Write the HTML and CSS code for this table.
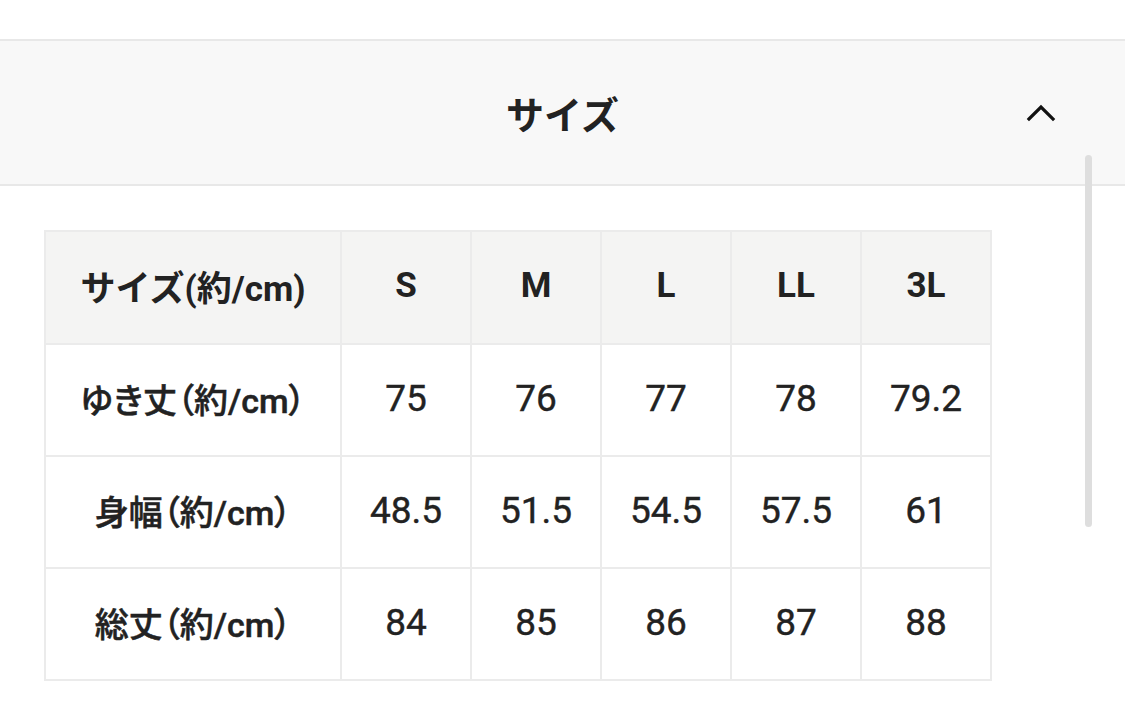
FILE: index.html
```html
<!DOCTYPE html>
<html lang="ja">
<head>
<meta charset="utf-8">
<link rel="stylesheet" href="styles.css">
</head>
<body>
<div class="page">
  <div class="top-space"></div>
  <div class="acc-head">
    <span class="acc-title">サイズ</span>
    <svg class="chev" width="30" height="18" viewBox="0 0 30 18"><path d="M3 15 L15 3 L27 15" fill="none" stroke="#111" stroke-width="3.2" stroke-linecap="square" stroke-linejoin="miter"/></svg>
  </div>
  <div class="acc-body">
    <table class="size-table">
      <colgroup><col class="c-label"><col class="c-val"><col class="c-val"><col class="c-val"><col class="c-val"><col class="c-val"></colgroup>
      <thead>
        <tr><th>サイズ(約/cm)</th><th>S</th><th>M</th><th>L</th><th>LL</th><th>3L</th></tr>
      </thead>
      <tbody>
        <tr><td class="lbl">ゆき丈（約/cm）</td><td>75</td><td>76</td><td>77</td><td>78</td><td>79.2</td></tr>
        <tr><td class="lbl">身幅（約/cm）</td><td>48.5</td><td>51.5</td><td>54.5</td><td>57.5</td><td>61</td></tr>
        <tr><td class="lbl">総丈（約/cm）</td><td>84</td><td>85</td><td>86</td><td>87</td><td>88</td></tr>
      </tbody>
    </table>
  </div>
  <div class="scrollbar"></div>
</div>
</body>
</html>
```
FILE: styles.css
```css
html, body {
  margin: 0;
  padding: 0;
  background: #ffffff;
}
body {
  font-family: "Roboto", "Noto Sans CJK JP", sans-serif;
  color: #222222;
}
.page {
  position: relative;
  width: 1125px;
  height: 706px;
  overflow: hidden;
}
.top-space {
  height: 39px;
}
.acc-head {
  position: relative;
  height: 143px;
  background: #f8f8f8;
  border-top: 2px solid #e8e8e8;
  border-bottom: 2px solid #e8e8e8;
  display: flex;
  align-items: center;
  justify-content: center;
}
.acc-title {
  font-family: "Noto Sans CJK JP", sans-serif;
  font-size: 38px;
  font-weight: 700;
  color: #222;
}
.chev {
  position: absolute;
  right: 69px;
  top: 63px;
}
.acc-body {
  padding: 44px 0 0 44px;
}
.size-table {
  border-collapse: collapse;
  table-layout: fixed;
  width: 948px;
}
.c-label { width: 296px; }
.c-val { width: 130px; }
.size-table th,
.size-table td {
  border: 2px solid #ebebeb;
  text-align: center;
  vertical-align: middle;
  padding: 0 0 4px 0;
  height: 106px;
  color: #222;
}
.size-table th {
  background: #f4f4f3;
  font-weight: 700;
  font-size: 35px;
  height: 107px;
}
.size-table td {
  font-size: 37px;
  font-weight: 400;
  -webkit-text-stroke: 0.4px #222;
}
.size-table td.lbl {
  font-size: 34px;
  font-weight: 500;
  -webkit-text-stroke: 0.5px #222;
  font-feature-settings: "palt";
}
.scrollbar {
  position: absolute;
  left: 1085px;
  top: 155px;
  width: 7px;
  height: 372px;
  border-radius: 4px;
  background: #dedede;
}
```
